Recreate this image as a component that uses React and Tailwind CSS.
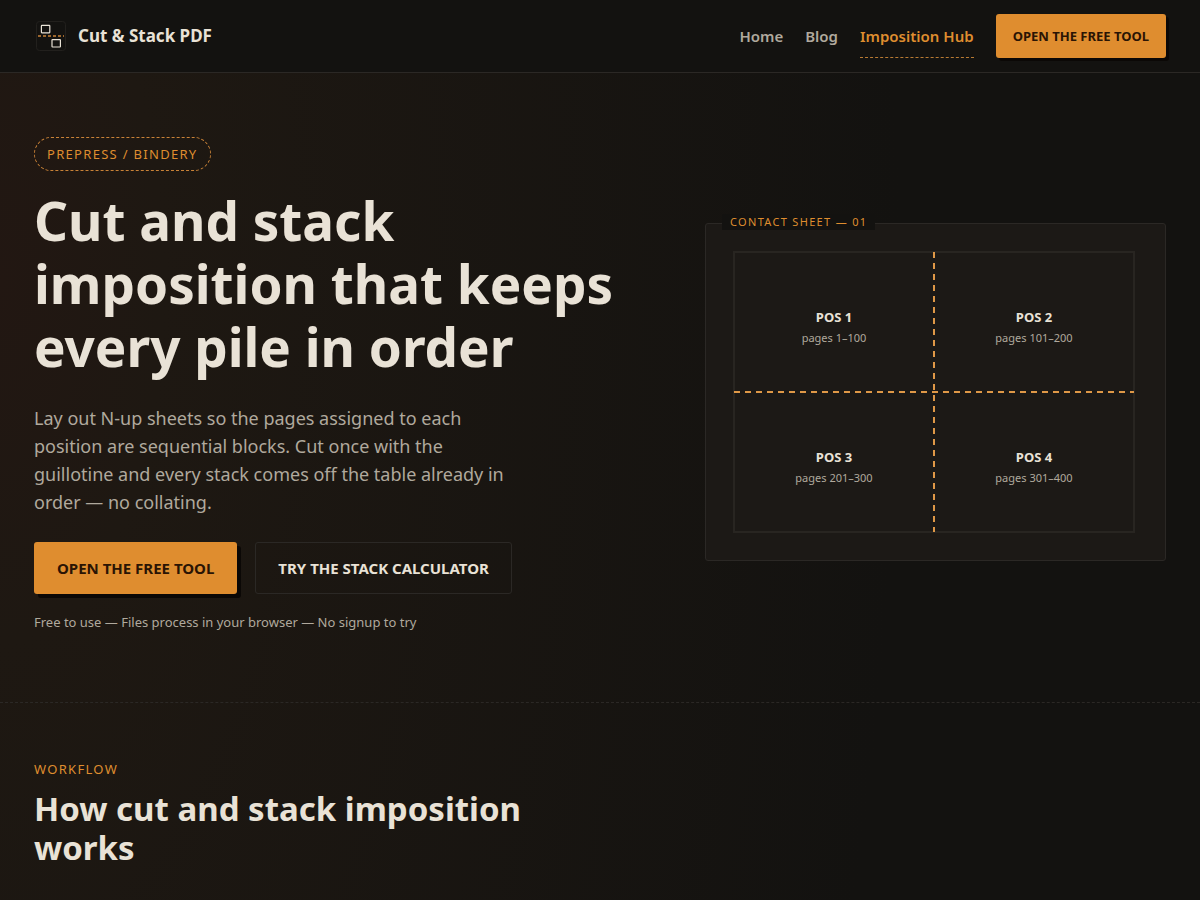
import React from "react";

const NAV_LINKS = [
  { label: "Home", href: "#home" },
  { label: "Blog", href: "#blog" },
];

const POSITIONS = [
  { name: "POS 1", pages: "pages 1–100", x: 101, y: 71 },
  { name: "POS 2", pages: "pages 101–200", x: 301, y: 71 },
  { name: "POS 3", pages: "pages 201–300", x: 101, y: 211 },
  { name: "POS 4", pages: "pages 301–400", x: 301, y: 211 },
];

const Logo = () => (
  <svg width="34" height="34" viewBox="0 0 34 34" fill="none" aria-hidden="true">
    <rect x="2.5" y="2.5" width="29" height="29" rx="3" stroke="#22201d" />
    <rect x="7.4" y="6.4" width="8.4" height="7.4" rx="0.5" stroke="#e9e2d6" strokeWidth="1.2" />
    <rect x="18" y="20.6" width="8.4" height="7.4" rx="0.5" stroke="#e9e2d6" strokeWidth="1.2" />
    <path d="M4 17H30" stroke="#c98237" strokeWidth="1.5" strokeDasharray="3 2" />
  </svg>
);

const Header = () => (
  <header className="border-b border-[#2b2825] bg-[#131210]">
    <div className="flex items-center justify-between px-[34px] py-[14px]">
      <a href="#home" className="flex items-center gap-[10px]">
        <Logo />
        <span className="text-[17px] leading-6 font-bold">Cut &amp; Stack PDF</span>
      </a>
      <nav className="flex items-center gap-[22px] text-[15px] leading-5 font-semibold text-[#b0a99d]">
        {NAV_LINKS.map((link) => (
          <a key={link.label} href={link.href}>
            {link.label}
          </a>
        ))}
        <a
          href="#hub"
          className="flex h-11 items-center border-b border-dashed border-[#b87a33] text-[#df8d2f]"
        >
          Imposition Hub
        </a>
        <a
          href="#tool"
          className="flex h-11 items-center rounded-[3px] bg-[#df8d2f] px-[17px] text-[13px] font-bold text-[#2a1404] shadow-[3px_3px_0_#0b0806]"
        >
          OPEN THE FREE TOOL
        </a>
      </nav>
    </div>
  </header>
);

const ContactSheet = () => (
  <figure className="relative rounded-[3px] border border-[#2b2825] bg-[#1c1916] p-[27px]">
    <figcaption className="absolute -top-[10px] left-4 bg-[#131210] px-2 text-[11px] leading-4 tracking-[0.12em] text-[#df8d2f]">
      CONTACT SHEET — 01
    </figcaption>
    <svg viewBox="0 0 405 282" className="block w-full" role="img" aria-label="Four-up sheet">
      <rect x="1" y="1" width="400" height="280" stroke="#282521" strokeWidth="2" fill="none" />
      <g stroke="#df9847" strokeWidth="2" strokeDasharray="6 5">
        <path d="M201 1V281" />
        <path d="M1 141H401" />
      </g>
      {POSITIONS.map((pos) => (
        <g key={pos.name} textAnchor="middle">
          <text x={pos.x} y={pos.y} fill="#e9e2d6" fontSize="13" fontWeight="700">
            {pos.name}
          </text>
          <text x={pos.x} y={pos.y + 20} fill="#b0a99d" fontSize="11">
            {pos.pages}
          </text>
        </g>
      ))}
    </svg>
  </figure>
);

const Hero = () => (
  <section className="grid grid-cols-1 items-center gap-[54px] border-b border-dashed border-[#2b2825] px-[34px] pt-16 pb-14 md:grid-cols-[617fr_461fr]">
    <div>
      <span className="inline-flex rounded-full border border-dashed border-[#c98237] px-3 py-[6px] text-[13px] leading-5 tracking-widest text-[#df8d2f]">
        PREPRESS / BINDERY
      </span>
      <h1 className="mt-[18px] text-[53px] leading-[63px] font-bold">
        Cut and stack imposition that keeps every pile in order
      </h1>
      <p className="mt-[26px] max-w-[480px] text-[18px] leading-7 text-[#b0a99d]">
        Lay out N-up sheets so the pages assigned to each position are sequential blocks. Cut once
        with the guillotine and every stack comes off the table already in order — no collating.
      </p>
      <div className="mt-[26px] flex flex-wrap gap-[18px] text-[15px] leading-5 font-bold">
        <a
          href="#tool"
          className="flex h-[52px] items-center rounded-[3px] bg-[#df8d2f] px-[23px] text-[#2a1404] shadow-[4px_4px_0_#0b0806]"
        >
          OPEN THE FREE TOOL
        </a>
        <a
          href="#calculator"
          className="flex h-[52px] items-center rounded-[3px] border border-[#2b2825] px-[22px]"
        >
          TRY THE STACK CALCULATOR
        </a>
      </div>
      <p className="mt-[18px] mb-[14px] text-[13px] leading-5 text-[#b0a99d]">
        Free to use — Files process in your browser — No signup to try
      </p>
    </div>
    <ContactSheet />
  </section>
);

const Workflow = () => (
  <section className="px-[34px] pt-14 pb-[30px]">
    <p className="text-[13px] leading-5 tracking-widest text-[#df8d2f]">WORKFLOW</p>
    <h2 className="mt-[10px] max-w-[560px] text-[33px] leading-[39px] font-bold">
      How cut and stack imposition works
    </h2>
  </section>
);

export default function App() {
  return (
    <div className="min-h-screen bg-[#131210] bg-[radial-gradient(ellipse_900px_2000px_at_0%_280px,#221712,#1e1812_18%,#131210)] font-['Noto_Sans',sans-serif] text-[#e9e2d6]">
      <Header />
      <Hero />
      <Workflow />
    </div>
  );
}
